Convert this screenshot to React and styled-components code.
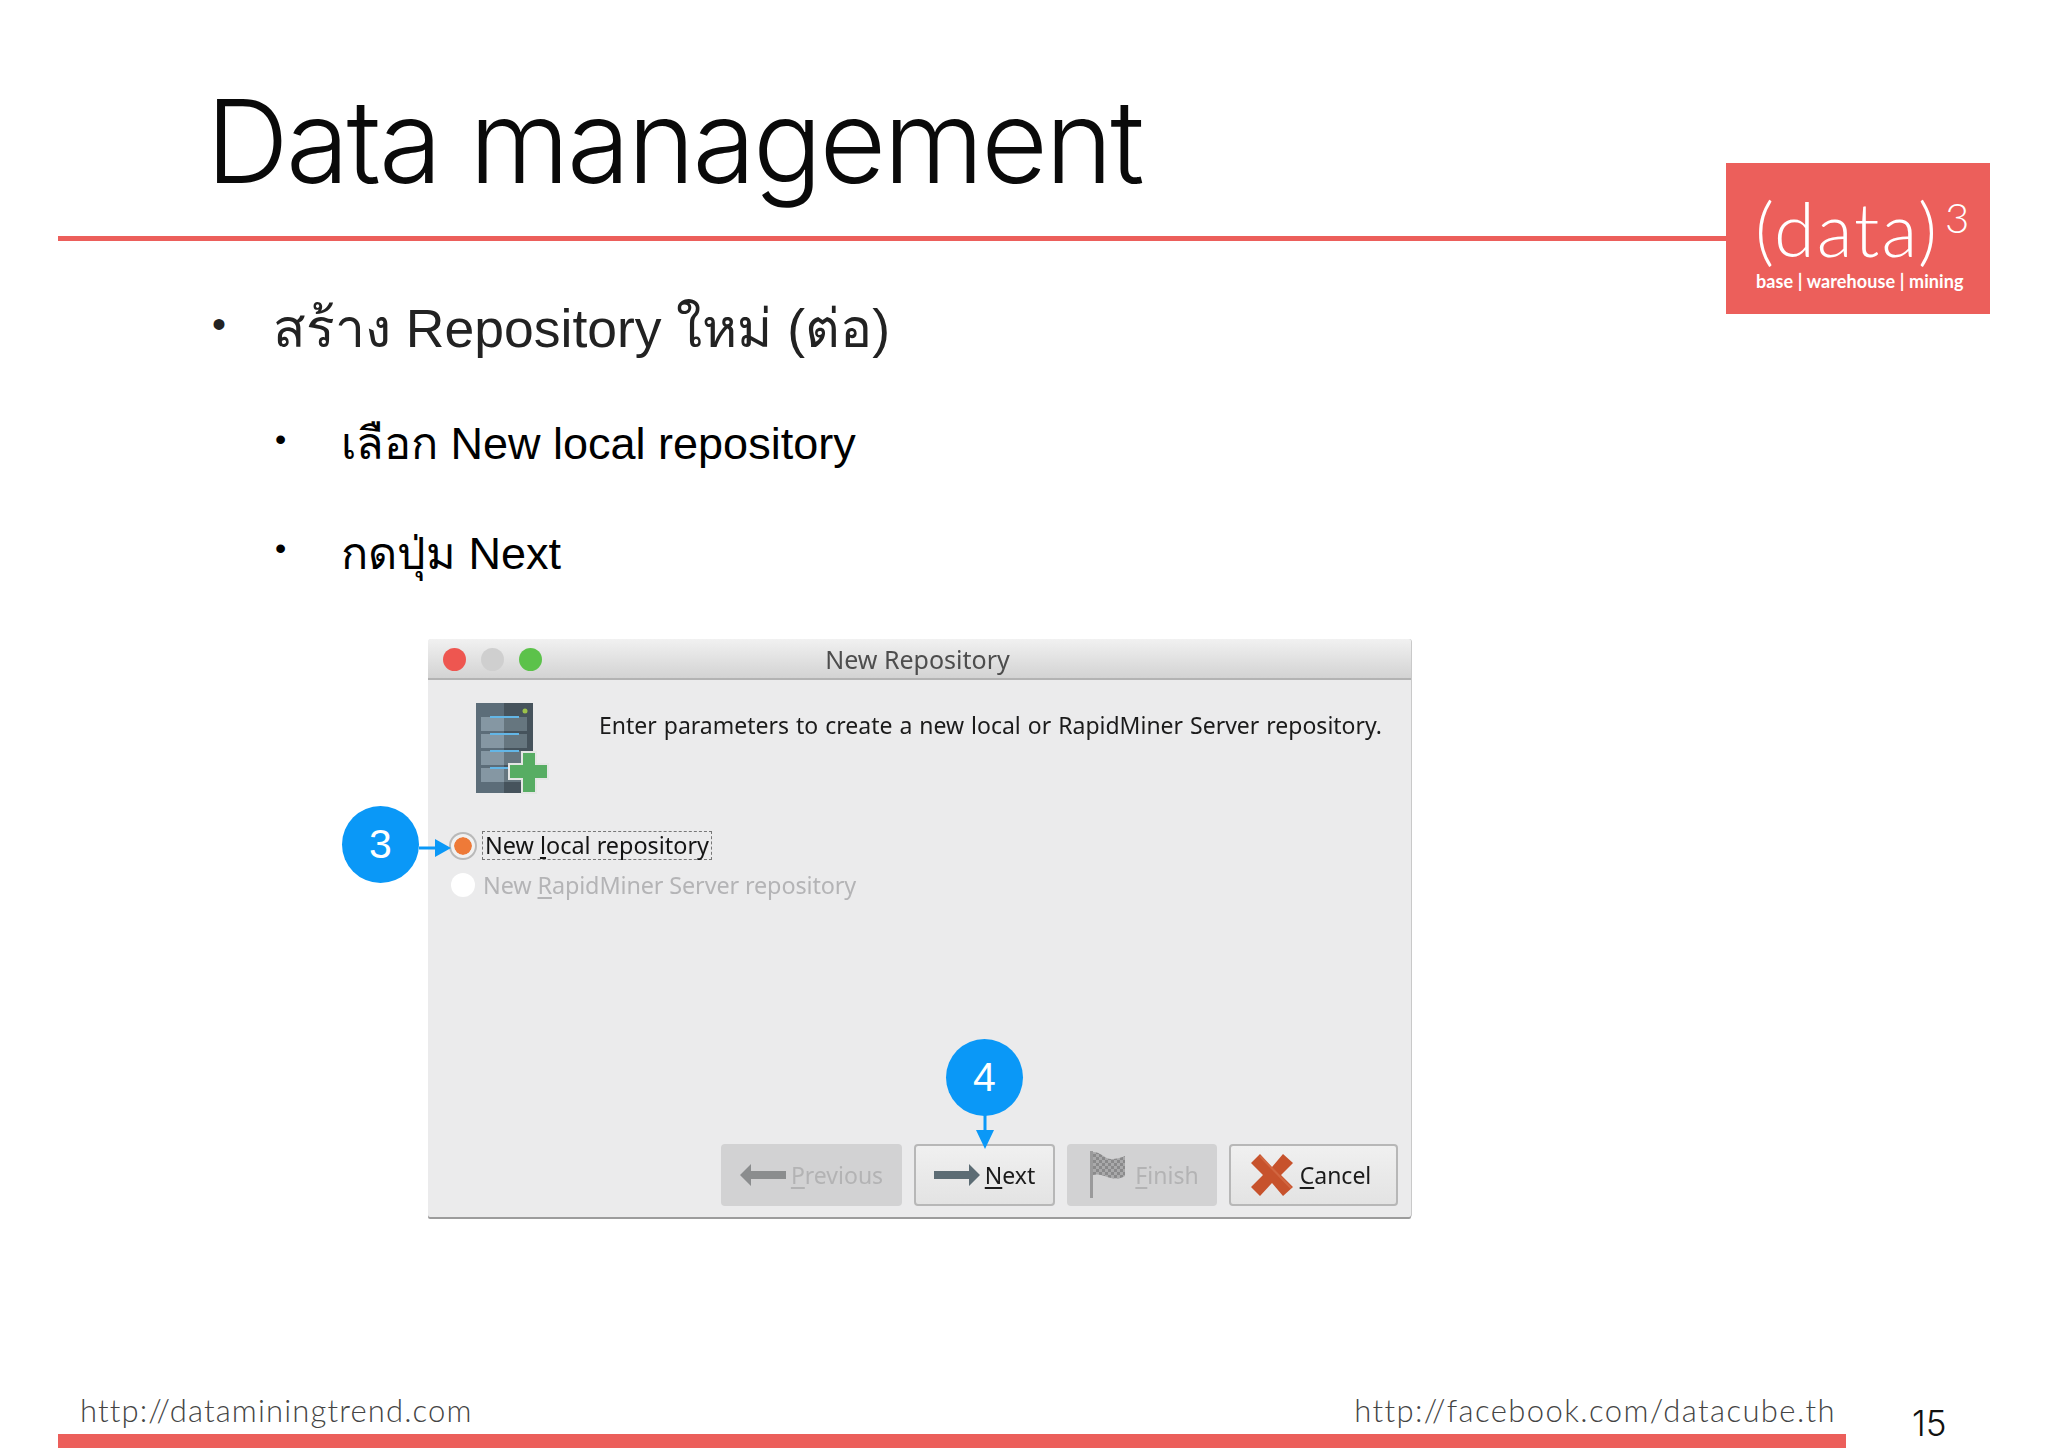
import React from "react";
import styled, { createGlobalStyle } from "styled-components";

const Global = createGlobalStyle`
  html, body { margin: 0; padding: 0; background: #fff; }
`;

const THAI = `"Liberation Sans", "Noto Sans", "DejaVu Sans", sans-serif`;
const GEO = `"Lato", "Open Sans", sans-serif`;
const UI = `"Noto Sans", "Open Sans", sans-serif`;

const Slide = styled.div`
  position: relative;
  width: 2048px;
  height: 1448px;
  overflow: hidden;
  background: #fff;
  display: flex;
  flex-direction: column;
  font-family: ${THAI};
  color: #000;
`;

const Title = styled.h1`
  margin: 0;
  padding: 72px 0 0 206px;
  height: 236px;
  flex: none;
  box-sizing: border-box;
  font-family: "Inter", "Liberation Sans", sans-serif;
  font-weight: 300;
  font-size: 115px;
  line-height: 140px;
  letter-spacing: -2.65px;
  color: #0a0a0a;
`;

const Rule = styled.div`
  flex: none;
  margin-left: 58px;
  width: 1668px;
  height: 5px;
  background: #ec5f5b;
`;

const Logo = styled.div`
  position: absolute;
  left: 1726px;
  top: 163px;
  width: 264px;
  height: 151px;
  background: #ec5f5b;
  color: #fff;
  font-family: ${GEO};
  display: flex;
  flex-direction: column;
  align-items: flex-start;
  padding: 33px 0 0 30px;
  box-sizing: border-box;
`;

const LogoMain = styled.div`
  font-size: 74px;
  font-weight: 300;
  line-height: 66px;
  letter-spacing: 2px;
  white-space: nowrap;
  margin-left: -1px;
  sup {
    font-size: 42px;
    font-weight: 300;
    line-height: 0;
    vertical-align: 24px;
    margin-left: 6px;
    letter-spacing: 0;
  }
`;

const LogoTag = styled.div`
  font-size: 18px;
  font-weight: 700;
  line-height: 20px;
  margin-top: 9px;
  letter-spacing: 0.1px;
  white-space: nowrap;
`;

const Bullets = styled.ul`
  list-style: none;
  margin: 0;
  padding: 0;
  flex: none;
`;

const Item = styled.li`
  display: flex;
  align-items: baseline;
  height: ${(p) => p.$h}px;
  margin-left: ${(p) => (p.$sub ? 275 : 212)}px;
  margin-top: ${(p) => p.$top || 0}px;
  font-size: ${(p) => (p.$sub ? 45 : 53.5)}px;
  line-height: ${(p) => p.$h}px;
  white-space: nowrap;
  color: ${(p) => (p.$sub ? "#000" : "#222")};
`;

const Dot = styled.span`
  flex: none;
  align-self: flex-start;
  width: ${(p) => (p.$sub ? 66 : 61)}px;
  font-size: ${(p) => (p.$sub ? 32 : 40)}px;
  line-height: ${(p) => p.$line}px;
`;

const Dialog = styled.div`
  position: relative;
  flex: none;
  margin: 30px 0 0 428px;
  width: 983px;
  height: 578px;
  background: #ebebec;
  box-shadow: 0 2px 0 #9c9c9c, 1px 0 0 #c9c9c9;
  border-radius: 3px 3px 2px 2px;
  display: flex;
  flex-direction: column;
  font-family: ${UI};
`;

const TitleBar = styled.div`
  position: relative;
  height: 41px;
  flex: none;
  display: flex;
  align-items: center;
  justify-content: center;
  padding-right: 4px;
  box-sizing: border-box;
  background: linear-gradient(#f1f1f1, #d3d3d3);
  border-bottom: 2px solid #b3b3b3;
  border-radius: 3px 3px 0 0;
  font-size: 25px;
  color: #4d4d4d;
  filter: blur(0.4px);
`;

const Lights = styled.div`
  position: absolute;
  left: 15px;
  top: 9px;
  display: flex;
  gap: 15px;
`;

const Light = styled.span`
  width: 23px;
  height: 23px;
  border-radius: 50%;
  background: ${(p) => p.$c};
`;

const Intro = styled.div`
  display: flex;
  align-items: flex-start;
  padding: 22px 0 0 47px;
  height: 150px;
  flex: none;
  box-sizing: border-box;
`;

const IntroText = styled.div`
  margin: 7px 0 0 50px;
  font-size: 23px;
  line-height: 32px;
  color: #1b1b1b;
  white-space: nowrap;
  word-spacing: 1px;
  filter: blur(0.4px);
`;

const Options = styled.div`
  display: flex;
  flex-direction: column;
  gap: 8px;
  padding-left: 23px;
  filter: blur(0.4px);
`;

const Option = styled.div`
  display: flex;
  align-items: center;
  gap: ${(p) => (p.$off ? 8 : 7)}px;
  height: 31px;
  font-size: 23.4px;
  letter-spacing: ${(p) => (p.$off ? -0.12 : 0)}px;
  color: ${(p) => (p.$off ? "#b4b4b6" : "#141414")};
`;

const Radio = styled.span`
  flex: none;
  width: 24px;
  height: 24px;
  border-radius: 50%;
  box-sizing: border-box;
  background: ${(p) => (p.$on ? "#ee7a38" : "#fff")};
  border: ${(p) => (p.$on ? "3px solid #f1f1f1" : "none")};
  box-shadow: ${(p) => (p.$on ? "0 0 0 2px #b9b9b9" : "none")};
  background-clip: padding-box;
`;

const Focus = styled.span`
  display: block;
  padding: 0 2px;
  height: 29px;
  line-height: 27px;
  border: 1px dashed #777;
  box-sizing: border-box;
  white-space: nowrap;
`;

const Plain = styled.span`
  display: block;
  white-space: nowrap;
`;

const Key = styled.span`
  text-decoration: underline;
  text-underline-offset: 3px;
`;

const Buttons = styled.div`
  margin-top: auto;
  display: flex;
  justify-content: flex-end;
  gap: 12px;
  padding: 0 13px 11px 0;
`;

const Btn = styled.div`
  width: ${(p) => p.$w}px;
  height: 62px;
  box-sizing: border-box;
  border-radius: 4px;
  display: flex;
  align-items: center;
  justify-content: center;
  gap: ${(p) => p.$gap || 5}px;
  padding: 0 ${(p) => p.$pr || 0}px 0 ${(p) => p.$pl || 0}px;
  font-size: 23px;
  filter: blur(0.4px);
  background: ${(p) => (p.$off ? "#d2d2d3" : "linear-gradient(#f0f0f0, #e3e3e3)")};
  border: ${(p) => (p.$off ? "none" : "2px solid #b7b7b7")};
  color: ${(p) => (p.$off ? "#b3b3b4" : "#1b1b1b")};
`;

const Callout = styled.div`
  position: absolute;
  left: ${(p) => p.$x}px;
  top: ${(p) => p.$y}px;
  width: 77px;
  height: 77px;
  border-radius: 50%;
  background: #0a98f7;
  color: #fff;
  font-family: "Liberation Sans", sans-serif;
  font-size: 41px;
  display: flex;
  align-items: center;
  justify-content: center;
`;

const Pointer = styled.svg`
  position: absolute;
  left: ${(p) => p.$x}px;
  top: ${(p) => p.$y}px;
`;

const Footer = styled.div`
  margin-top: auto;
  flex: none;
  display: flex;
  flex-direction: column;
`;

const Links = styled.div`
  display: flex;
  align-items: flex-end;
  padding: 0 0 6px 80px;
  font-family: ${GEO};
  font-weight: 300;
  font-size: 31px;
  line-height: 36px;
  letter-spacing: 1.15px;
  color: #444;
`;

const LinkRight = styled.span`
  margin-left: auto;
  margin-right: 212px;
  letter-spacing: 1.4px;
`;

const Bar = styled.div`
  margin-left: 58px;
  width: 1788px;
  height: 14px;
  background: #ec5f5b;
`;

const PageNo = styled.div`
  position: absolute;
  left: 1912px;
  top: 1405px;
  font-family: "Inter", "Liberation Sans", sans-serif;
  font-weight: 300;
  font-size: 35px;
  line-height: 36px;
  color: #111;
`;

const ServerIcon = () => (
  <svg width="74" height="92" viewBox="0 0 74 92" style={{ flex: "none" }}>
    <rect x="1" y="1" width="28" height="90" fill="#5c6d79" />
    <rect x="29" y="1" width="29" height="90" fill="#46535c" />
    {[15, 32, 49, 66].map((y) => (
      <g key={y}>
        <rect x="6" y={y} width="46" height="14" fill="#8597a3" />
        <rect x="29" y={y} width="23" height="14" fill="#66767f" />
        <rect x="15" y={y - 1} width="29" height="2" fill="#63b6e6" />
      </g>
    ))}
    <circle cx="50" cy="9" r="2.5" fill="#9cc24a" />
    <path
      d="M35 50h13V38h14v12h12v15H62v14H48V65H35z"
      transform="translate(-1 12)"
      fill="#57ad63"
      stroke="#e4e6e4"
      strokeWidth="2"
    />
  </svg>
);

const ArrowLeft = () => (
  <svg width="46" height="26" viewBox="0 0 46 26">
    <path d="M0 13 11 2v7h35v8H11v7z" fill="#8b8d8e" />
  </svg>
);
const ArrowRight = () => (
  <svg width="46" height="26" viewBox="0 0 46 26">
    <path d="M46 13 35 2v7H0v8h35v7z" fill="#5c6c74" />
  </svg>
);
const Flag = () => (
  <svg width="36" height="48" viewBox="0 0 36 48">
    <defs>
      <pattern id="chk" width="6" height="6" patternUnits="userSpaceOnUse">
        <rect width="6" height="6" fill="#a9a9aa" />
        <rect width="3" height="3" fill="#8a8a8b" />
        <rect x="3" y="3" width="3" height="3" fill="#8a8a8b" />
      </pattern>
    </defs>
    <rect x="0" y="0" width="3" height="47" fill="#9a9a9b" />
    <path d="M3 1c8 0 12 7 18 7s9-1 14-3v20c-5 3-9 3-14 2S10 22 3 24z" fill="url(#chk)" />
  </svg>
);
const Cross = () => (
  <svg width="42" height="42" viewBox="0 0 42 42">
    <path
      d="M9 0 21 13 32 0l10 9-12 12 12 12-10 9-11-13L9 42 0 33l12-12L0 9z"
      fill="#c7522c"
    />
    <path d="M9 2 40 34" stroke="#dc7a55" strokeWidth="2" opacity=".5" />
  </svg>
);

export default function App() {
  return (
    <Slide>
      <Global />
      <Title>Data management</Title>
      <Rule />
      <Logo>
        <LogoMain>
          (data)<sup>3</sup>
        </LogoMain>
        <LogoTag>base | warehouse | mining</LogoTag>
      </Logo>

      <Bullets>
        <Item $h={100} $top={38}>
          <Dot $line={90}>•</Dot>
          <span lang="th">สร้าง Repository ใหม่ (ต่อ)</span>
        </Item>
        <Item $sub $h={110} $top={10}>
          <Dot $sub $line={100}>•</Dot>
          <span lang="th">เลือก New local repository</span>
        </Item>
        <Item $sub $h={110}>
          <Dot $sub $line={98}>•</Dot>
          <span lang="th">กดปุ่ม Next</span>
        </Item>
      </Bullets>

      <Dialog>
        <TitleBar>
          <Lights>
            <Light $c="#ee5650" />
            <Light $c="#cfcfcf" />
            <Light $c="#5cc24a" />
          </Lights>
          New Repository
        </TitleBar>
        <Intro>
          <ServerIcon />
          <IntroText>Enter parameters to create a new local or RapidMiner Server repository.</IntroText>
        </Intro>
        <Options>
          <Option>
            <Radio $on />
            <Focus>
              New <Key>l</Key>ocal repository
            </Focus>
          </Option>
          <Option $off>
            <Radio />
            <Plain>
              New <Key>R</Key>apidMiner Server repository
            </Plain>
          </Option>
        </Options>
        <Buttons>
          <Btn $off $w={181}>
            <ArrowLeft />
            <span>
              <Key>P</Key>revious
            </span>
          </Btn>
          <Btn $w={141}>
            <ArrowRight />
            <span>
              <Key>N</Key>ext
            </span>
          </Btn>
          <Btn $off $w={150} $gap={9} $pl={5}>
            <Flag />
            <span>
              <Key>F</Key>inish
            </span>
          </Btn>
          <Btn $w={169} $gap={7} $pr={5}>
            <Cross />
            <span>
              <Key>C</Key>ancel
            </span>
          </Btn>
        </Buttons>

        <Callout $x={-86} $y={167}>3</Callout>
        <Pointer $x={-9} $y={199} width="32" height="20" viewBox="0 0 32 20">
          <path d="M0 8.5h16V1l16 9-16 9v-7.5H0z" fill="#0a98f7" />
        </Pointer>
        <Callout $x={518} $y={400}>4</Callout>
        <Pointer $x={547} $y={476} width="20" height="34" viewBox="0 0 20 34">
          <path d="M8.5 0h3v15H19l-9 19-9-19h7.5z" fill="#0a98f7" />
        </Pointer>
      </Dialog>

      <Footer>
        <Links>
          <span>http://dataminingtrend.com</span>
          <LinkRight>http://facebook.com/datacube.th</LinkRight>
        </Links>
        <Bar />
      </Footer>
      <PageNo>15</PageNo>
    </Slide>
  );
}
